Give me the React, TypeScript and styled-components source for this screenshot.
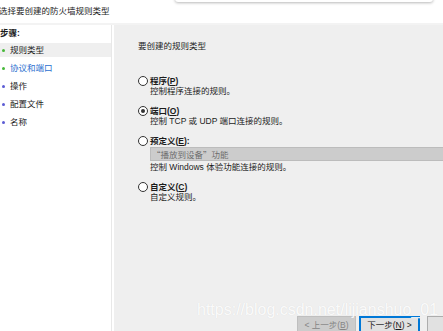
import styled, { createGlobalStyle } from 'styled-components';

const GlobalStyle = createGlobalStyle`
    html, body {
        margin: 0;
        padding: 0;
        background: #ffffff;
    }
    body {
        font-family: 'Liberation Sans', 'Noto Sans CJK SC', sans-serif;
        color: #1b1b1b;
    }
`;

const Window = styled.div`
    position: relative;
    width: 443px;
    height: 331px;
    overflow: hidden;
    background: #ffffff;
    font-size: 8.5px;
    line-height: 10px;
`;

const Popup = styled.div`
    position: absolute;
    left: 175px;
    top: -12px;
    width: 258px;
    height: 14px;
    background: #ffffff;
    border-radius: 3px;
    box-shadow: 0 1px 3px rgba(0, 0, 0, 0.28);
`;

const Header = styled.div`
    height: 25px;
    display: flex;
    align-items: center;
    border-bottom: 2px solid #f3f3f3;
    box-sizing: border-box;
`;

const Title = styled.div`
    margin-left: -1px;
    margin-top: -2px;
`;

const Body = styled.div`
    display: flex;
    height: 312px;
`;

const Nav = styled.div`
    width: 111px;
    flex-shrink: 0;
    border-right: 1px solid #e8e8e8;
    display: flex;
    flex-direction: column;
    padding-top: 3px;
`;

const NavTitle = styled.div`
    font-weight: bold;
    height: 10px;
    margin-bottom: 5px;
`;

const Step = styled.div<{ $active?: boolean; $current?: boolean; $done?: boolean }>`
    display: flex;
    align-items: center;
    height: 14px;
    margin-bottom: 4px;
    padding-left: 2px;
    background: ${(p) => (p.$active ? '#efefef' : 'transparent')};
    color: ${(p) => (p.$current ? '#2b6fcf' : '#1b1b1b')};

    &::before {
        content: '';
        width: 3px;
        height: 3px;
        border-radius: 50%;
        margin-right: 5px;
        background: ${(p) => (p.$done ? '#47b83a' : '#5c5cd4')};
    }
`;

const Main = styled.div`
    flex: 1;
    min-width: 0;
    overflow: hidden;
    margin-left: 2px;
    background: #efefef;
    display: flex;
    flex-direction: column;
    padding: 16px 0 0 24px;
`;

const Heading = styled.div`
    margin-bottom: 25px;
`;

const Options = styled.div`
    display: flex;
    flex-direction: column;
    gap: 10px;
`;

const Option = styled.div`
    display: flex;
    flex-direction: column;
`;

const LabelRow = styled.div`
    display: flex;
    align-items: center;
    height: 10px;
    font-weight: bold;
    gap: 2px;
`;

const Radio = styled.span<{ $checked?: boolean }>`
    width: 10px;
    height: 10px;
    flex-shrink: 0;
    border: 1px solid #333333;
    border-radius: 50%;
    background: #ffffff;
    box-sizing: border-box;
    display: flex;
    align-items: center;
    justify-content: center;

    &::after {
        content: '';
        width: 4px;
        height: 4px;
        border-radius: 50%;
        background: ${(p) => (p.$checked ? '#333333' : 'transparent')};
    }
`;

const Desc = styled.div`
    height: 10px;
    padding-left: 12px;
    white-space: nowrap;
`;

const Select = styled.div`
    margin: 1px 0 1px 12px;
    height: 14px;
    background: #cccccc;
    border: 1px solid #bcbcbc;
    border-right: none;
    box-sizing: border-box;
    color: #6e6e6e;
    font-family: 'Noto Sans CJK SC', sans-serif;
    display: flex;
    align-items: center;
    padding-left: 1px;
`;

const Footer = styled.div`
    margin-top: auto;
    display: flex;
    padding-left: 159px;
    gap: 3px;
`;

const Button = styled.div<{ $variant?: 'disabled' | 'primary' | 'plain' }>`
    height: 21px;
    box-sizing: border-box;
    display: flex;
    align-items: center;
    justify-content: center;
    width: ${(p) => (p.$variant === 'primary' ? '61px' : '59px')};
    margin-left: ${(p) => (p.$variant === 'plain' ? '4px' : '0')};
    flex-shrink: 0;
    background: ${(p) => (p.$variant === 'disabled' ? '#cccccc' : '#e1e1e1')};
    color: ${(p) => (p.$variant === 'disabled' ? '#858585' : '#1b1b1b')};
    border: ${(p) =>
        p.$variant === 'primary'
            ? '1px solid #0078d7'
            : p.$variant === 'disabled'
              ? '1px solid #bfbfbf'
              : '1px solid #adadad'};
    box-shadow: ${(p) => (p.$variant === 'primary' ? 'inset 0 0 0 1px #0078d7' : 'none')};
    padding-bottom: 4px;
`;

const Watermark = styled.div`
    position: absolute;
    left: 197px;
    top: 302px;
    font-family: 'Liberation Sans', Arial, sans-serif;
    font-size: 16px;
    line-height: 16px;
    color: rgba(255, 255, 255, 0.9);
    text-shadow: 0 0 1px rgba(0, 0, 0, 0.1);
    pointer-events: none;
    white-space: nowrap;
`;

export default function App() {
    return (
        <>
            <GlobalStyle />
            <Window>
                <Popup />
                <Header>
                    <Title>选择要创建的防火墙规则类型</Title>
                </Header>
                <Body>
                    <Nav>
                        <NavTitle>步骤:</NavTitle>
                        <Step $active $done>规则类型</Step>
                        <Step $current $done>协议和端口</Step>
                        <Step>操作</Step>
                        <Step>配置文件</Step>
                        <Step>名称</Step>
                    </Nav>
                    <Main>
                        <Heading>要创建的规则类型</Heading>
                        <Options>
                            <Option>
                                <LabelRow>
                                    <Radio />
                                    <span>程序(<u>P</u>)</span>
                                </LabelRow>
                                <Desc>控制程序连接的规则。</Desc>
                            </Option>
                            <Option>
                                <LabelRow>
                                    <Radio $checked />
                                    <span>端口(<u>O</u>)</span>
                                </LabelRow>
                                <Desc>控制 TCP 或 UDP 端口连接的规则。</Desc>
                            </Option>
                            <Option>
                                <LabelRow>
                                    <Radio />
                                    <span>预定义(<u>E</u>):</span>
                                </LabelRow>
                                <Select>“播放到设备”功能</Select>
                                <Desc>控制 Windows 体验功能连接的规则。</Desc>
                            </Option>
                            <Option>
                                <LabelRow>
                                    <Radio />
                                    <span>自定义(<u>C</u>)</span>
                                </LabelRow>
                                <Desc>自定义规则。</Desc>
                            </Option>
                        </Options>
                        <Footer>
                            <Button $variant="disabled">&lt; 上一步(<u>B</u>)</Button>
                            <Button $variant="primary">下一步(<u>N</u>) &gt;</Button>
                            <Button $variant="plain">取消</Button>
                        </Footer>
                    </Main>
                </Body>
                <Watermark>https://blog.csdn.net/lijianshuo_01</Watermark>
            </Window>
        </>
    );
}
